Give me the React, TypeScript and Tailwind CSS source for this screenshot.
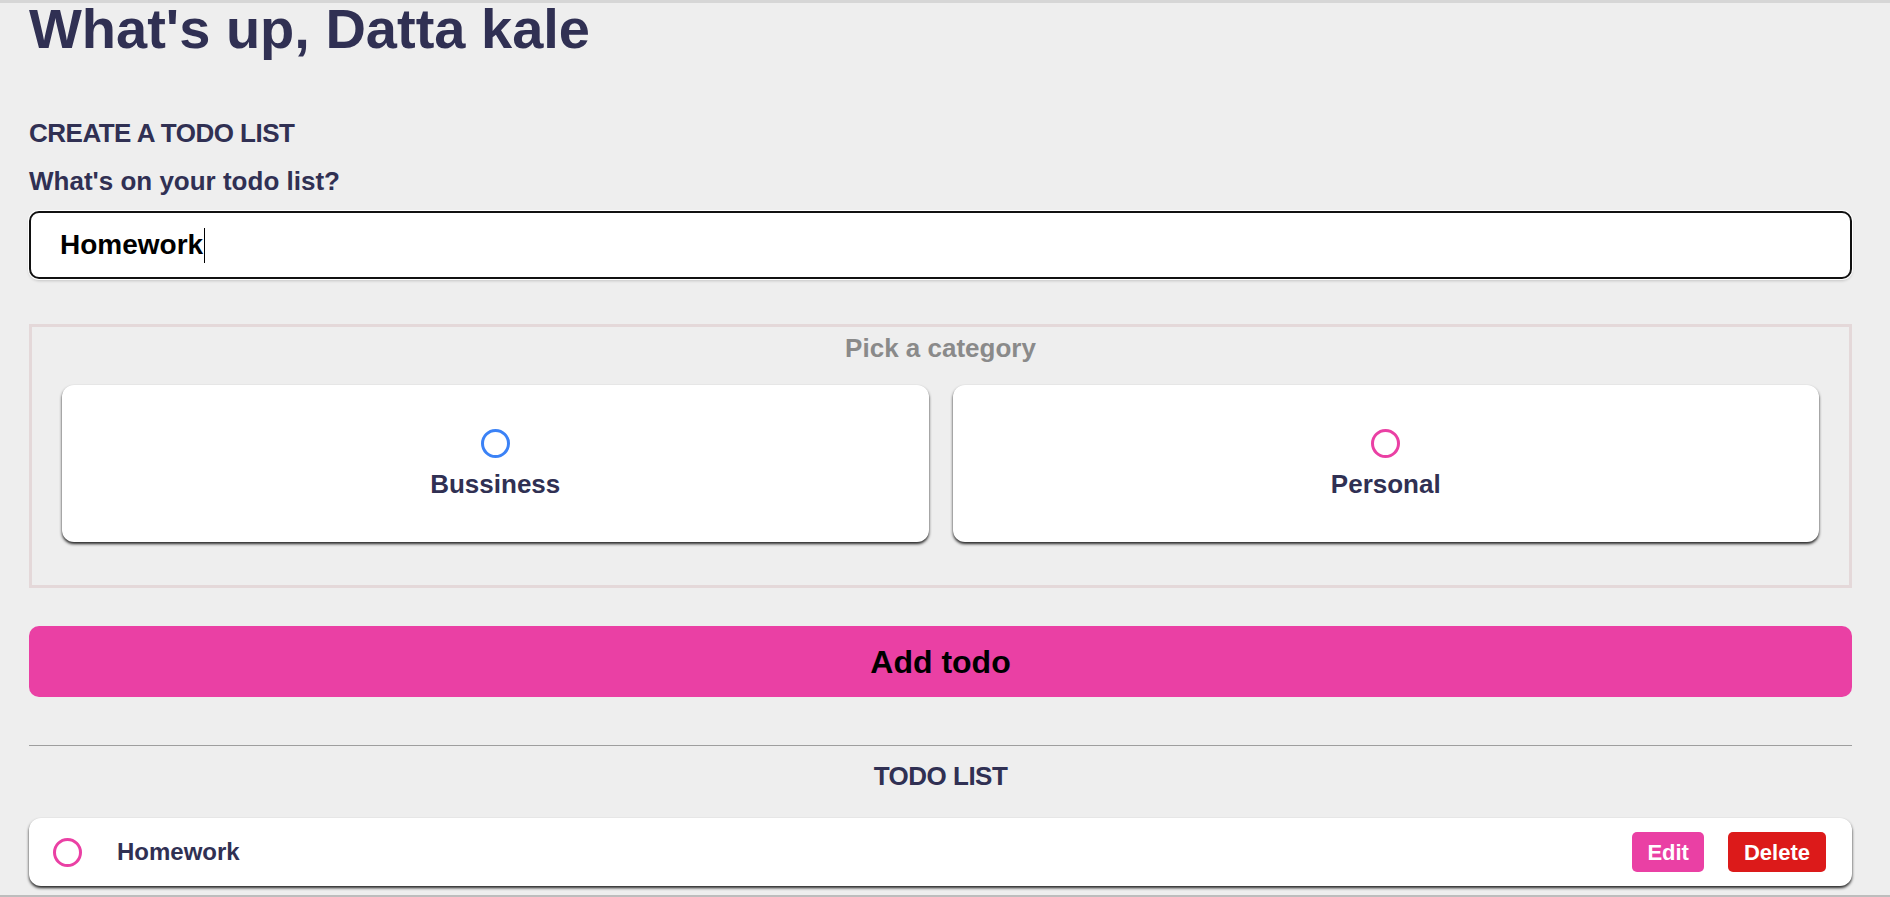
import React from "react";

const categories = [
  { label: "Bussiness", ring: "border-[#3b82f6]" },
  { label: "Personal", ring: "border-[#ea40a4]" },
];

const todos = [{ text: "Homework", ring: "border-[#ea40a4]" }];

export default function App() {
  return (
    <div className="h-[897px] overflow-hidden border-t-[3px] border-b-2 border-t-[#d6d6d6] border-b-[#bdbdbd] bg-[#eeeeee] font-['Liberation_Sans',Arial,sans-serif] font-bold text-[#303053]">
      <div className="pl-[29px] pr-[38px]">
        <h1 className="text-[56px] leading-[52px]">What's up, Datta kale</h1>

        <h2 className="mt-[63px] text-[26px] leading-[30px] tracking-[-0.5px] uppercase">
          Create a todo list
        </h2>
        <label className="mt-[18px] block text-[26px] leading-[30px]">What's on your todo list?</label>

        {/* text field, drawn with its caret showing */}
        <div
          role="textbox"
          className="mt-[15px] flex h-[68px] w-full items-center rounded-[10px] border-2 border-[#111] bg-white pl-[29px] text-[28px] text-black shadow-[0_0_0_1px_#fff,0_2px_3px_rgba(0,0,0,0.18)]"
        >
          <span>Homework</span>
          <span className="ml-px h-[35px] w-px bg-black" />
        </div>

        {/* category picker */}
        <div className="mt-[45px] border-[3px] border-[#e4d8d9] px-[30px] pt-[6px] pb-[43px]">
          <p className="text-center text-[26px] leading-[30px] text-[#8a8a8a]">Pick a category</p>
          <div className="mt-[22px] grid grid-cols-2 gap-[24px]">
            {categories.map((c) => (
              <label
                key={c.label}
                className="flex h-[157px] cursor-pointer flex-col items-center justify-center gap-[11px] rounded-[12px] bg-white shadow-[0_2px_3px_rgba(0,0,0,0.85)]"
              >
                <span className={`h-[29px] w-[29px] rounded-full border-[3px] ${c.ring}`} />
                <span className="text-[26px] leading-[30px]">{c.label}</span>
              </label>
            ))}
          </div>
        </div>

        <button className="mt-[38px] block h-[71px] w-full rounded-[10px] bg-[#ea40a4] text-[32px] font-bold text-black">
          Add todo
        </button>

        <hr className="mt-[48px] border-0 border-t border-[#9e9e9e]" />

        <h2 className="mt-[15px] text-center text-[26px] leading-[30px] tracking-[-0.5px] uppercase">
          Todo list
        </h2>

        {todos.map((t) => (
          <div
            key={t.text}
            className="mt-[27px] flex h-[68px] items-center rounded-[12px] bg-white pl-[24px] pr-[26px] shadow-[0_2px_3px_rgba(0,0,0,0.85)]"
          >
            <span className={`h-[29px] w-[29px] shrink-0 rounded-full border-[3px] ${t.ring}`} />
            <span className="ml-[35px] flex-1 text-[24px] leading-[28px]">{t.text}</span>
            <div className="flex items-center gap-[24px]">
              <button className="flex h-[40px] items-center rounded-[5px] bg-[#ea40a4] px-[15px] text-[22px] font-bold text-white">
                Edit
              </button>
              <button className="flex h-[40px] items-center rounded-[5px] bg-[#dc1a1a] px-[16px] text-[22px] font-bold text-white">
                Delete
              </button>
            </div>
          </div>
        ))}
      </div>
    </div>
  );
}
